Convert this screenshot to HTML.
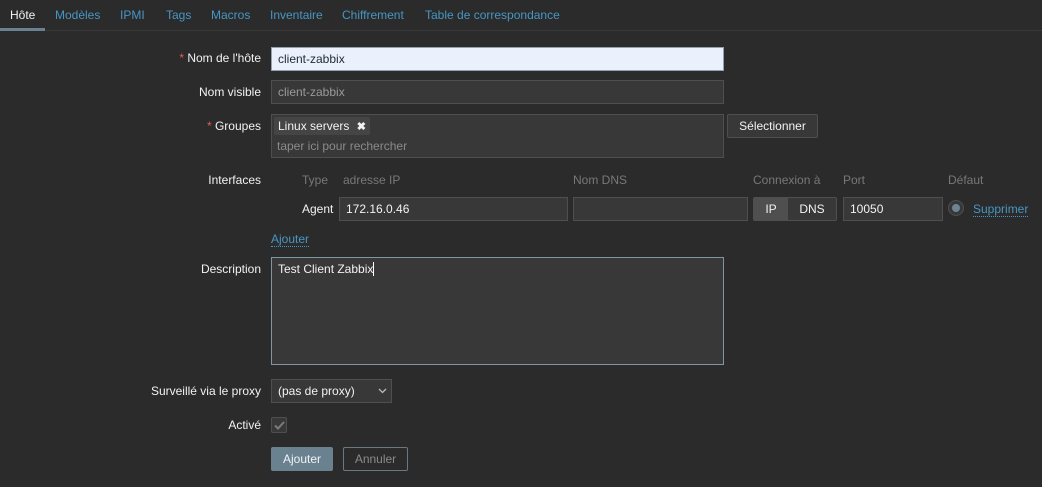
<!DOCTYPE html>
<html><head><meta charset="utf-8"><style>
*{box-sizing:border-box;margin:0;padding:0}
body{width:1042px;height:487px;background:#2b2b2b;font-family:"Liberation Sans",Arial,sans-serif;font-size:12px;color:#f2f2f2;position:relative;overflow:hidden}
.a{position:absolute}
.tab{position:absolute;top:8px;color:#4796c4;font-size:12px}
.lbl{position:absolute;right:781px;text-align:right;color:#f2f2f2;white-space:nowrap}
.req{color:#e45959}
.in{position:absolute;background:#383838;border:1px solid #4f4f4f;height:24px;line-height:22px;padding-left:6px;color:#f2f2f2}
.hd{position:absolute;top:173px;color:#787878}
.btn{position:absolute;border:1px solid #4f4f4f;background:#383838;color:#f2f2f2;text-align:center;border-radius:2px}
</style></head><body>
<div class="tab" style="left:10px;color:#f2f2f2">Hôte</div>
<div class="tab" style="left:55px">Modèles</div>
<div class="tab" style="left:120px">IPMI</div>
<div class="tab" style="left:166px">Tags</div>
<div class="tab" style="left:211px">Macros</div>
<div class="tab" style="left:270px">Inventaire</div>
<div class="tab" style="left:342px">Chiffrement</div>
<div class="tab" style="left:425px">Table de correspondance</div>
<div class="a" style="left:0;top:30px;width:1042px;height:1px;background:#383838"></div>
<div class="a" style="left:0;top:28px;width:45px;height:3px;background:#6a8290"></div>

<div class="lbl" style="top:51px"><span class="req">*</span> Nom de l'hôte</div>
<div class="in" style="left:271px;top:47px;width:453px;background:#eaf1fd;border-color:#8fa3b3;color:#1f2c33">client-zabbix</div>
<div class="lbl" style="top:85px">Nom visible</div>
<div class="in" style="left:271px;top:80px;width:453px;color:#9a9a9a">client-zabbix</div>
<div class="lbl" style="top:119px"><span class="req">*</span> Groupes</div>
<div class="in" style="left:271px;top:114px;width:453px;height:44px"></div>
<div class="a" style="left:274px;top:117px;width:96px;height:18px;background:#454545;border-radius:2px;line-height:18px;padding-left:4px;color:#f2f2f2;white-space:nowrap">Linux servers <span style="margin-left:4px;font-weight:bold;font-size:11px">✖</span></div>
<div class="a" style="left:277px;top:139px;color:#8a8a8a">taper ici pour rechercher</div>
<div class="btn" style="left:727px;top:114px;width:91px;height:24px;line-height:22px">Sélectionner</div>

<div class="lbl" style="top:173px">Interfaces</div>
<div class="hd" style="left:302px">Type</div>
<div class="hd" style="left:343px">adresse IP</div>
<div class="hd" style="left:573px">Nom DNS</div>
<div class="hd" style="left:753px">Connexion à</div>
<div class="hd" style="left:843px">Port</div>
<div class="hd" style="left:948px">Défaut</div>
<div class="a" style="left:302px;top:202px">Agent</div>
<div class="in" style="left:339px;top:197px;width:229px">172.16.0.46</div>
<div class="in" style="left:573px;top:197px;width:175px"></div>
<div class="a" style="left:753px;top:197px;width:84px;height:24px;border:1px solid #4f4f4f;border-radius:2px;background:#383838;overflow:hidden">
<div class="a" style="left:0;top:0;width:34px;height:22px;background:#4f4f4f;text-align:center;line-height:22px">IP</div>
<div class="a" style="left:34px;top:0;width:48px;height:22px;text-align:center;line-height:22px">DNS</div></div>
<div class="in" style="left:843px;top:197px;width:100px">10050</div>
<div class="a" style="left:948px;top:200px;width:16px;height:16px;border-radius:50%;background:#383838;border:1px solid #4f4f4f"><div class="a" style="left:3px;top:3px;width:8px;height:8px;border-radius:50%;background:#6c8593"></div></div>
<div class="a" style="left:973px;top:202px;color:#4796c4;border-bottom:1px dotted #4796c4">Supprimer</div>
<div class="a" style="left:271px;top:232px;color:#4796c4;border-bottom:1px dotted #4796c4">Ajouter</div>

<div class="lbl" style="top:262px">Description</div>
<div class="in" style="left:271px;top:257px;width:453px;height:108px;border-color:#7e95a2;line-height:18px;padding-top:2px">Test Client Zabbix<span style="border-left:1px solid #fff"></span></div>
<div class="lbl" style="top:384px">Surveillé via le proxy</div>
<div class="in" style="left:271px;top:379px;width:121px">(pas de proxy)<svg class="a" style="left:106px;top:8px" width="9" height="6" viewBox="0 0 9 6"><path d="M1 1 L4.5 4.5 L8 1" stroke="#bbb" stroke-width="1.3" fill="none"/></svg></div>
<div class="lbl" style="top:418px">Activé</div>
<div class="a" style="left:271px;top:417px;width:16px;height:16px;background:#383838;border:1px solid #4f4f4f;border-radius:2px"><svg class="a" style="left:2px;top:3px" width="11" height="9" viewBox="0 0 11 9"><path d="M1 4.5 L4 7.5 L10 1" stroke="#7b7b7b" stroke-width="2" fill="none"/></svg></div>
<div class="btn" style="left:271px;top:447px;width:62px;height:24px;line-height:22px;background:#6a8290;border-color:#6a8290">Ajouter</div>
<div class="btn" style="left:343px;top:447px;width:65px;height:24px;line-height:22px;background:transparent;border-color:#6a7880;color:#8a8a8a">Annuler</div>
</body></html>
